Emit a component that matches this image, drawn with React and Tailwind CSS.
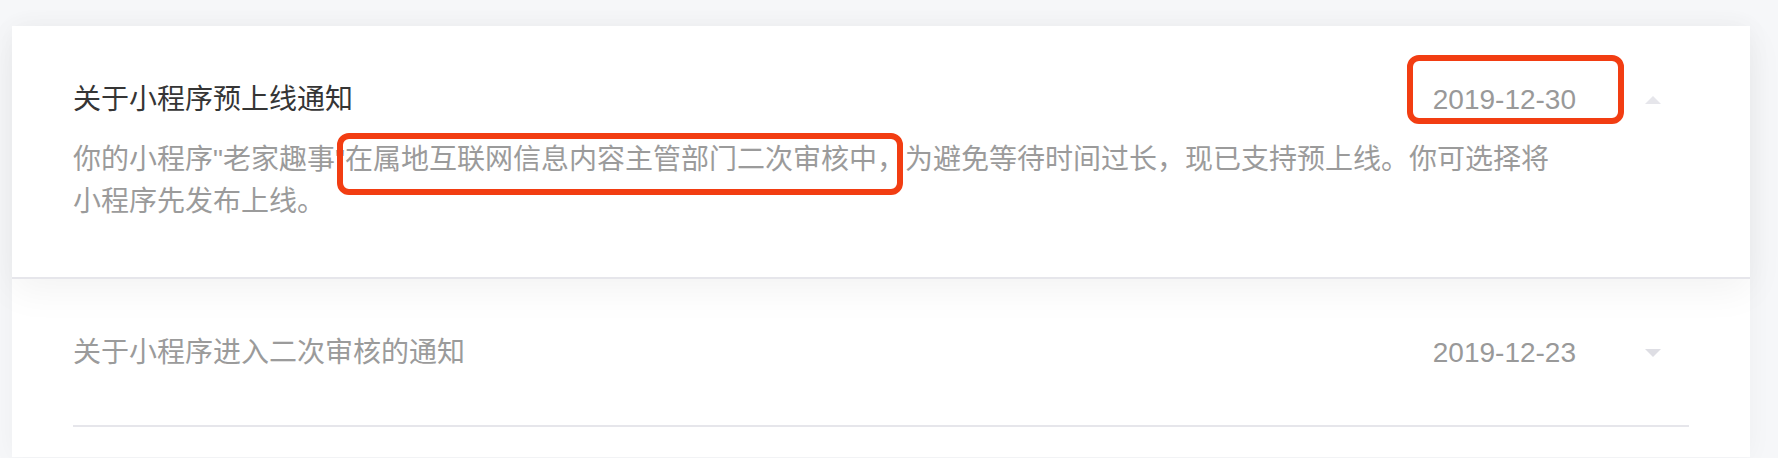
import React, { useState } from 'react';

const notices = [
  {
    id: 1,
    title: '关于小程序预上线通知',
    date: '2019-12-30',
    body: '你的小程序"老家趣事"在属地互联网信息内容主管部门二次审核中，为避免等待时间过长，现已支持预上线。你可选择将小程序先发布上线。',
  },
  {
    id: 2,
    title: '关于小程序进入二次审核的通知',
    date: '2019-12-23',
    body: '',
  },
];

const Caret = ({ up }) => (
  <svg width="16" height="8" viewBox="0 0 16 8" className="block">
    {up ? <path d="M8 0 L16 8 L0 8 Z" fill="#e6e6eb" /> : <path d="M0 0 L16 0 L8 8 Z" fill="#dedee4" />}
  </svg>
);

const App = () => {
  const [openId, setOpenId] = useState(1);

  return (
    <div
      className="relative h-[458px] bg-[#f6f7f9] pt-[26px] pl-[12px] pr-[28px] overflow-hidden"
      style={{ fontFamily: '"Liberation Sans", "Noto Sans CJK SC", sans-serif' }}
    >
      <div className="bg-white shadow-[0_0_24px_rgba(0,0,0,0.04)]">
        {notices.map((item) => {
          const open = item.id === openId;
          return open ? (
            <div
              key={item.id}
              className="relative z-10 bg-white px-[61px] pt-[53px] pb-[54px] border-b-2 border-[#e6e6eb] shadow-[0_12px_36px_rgba(0,0,0,0.05)] cursor-pointer"
              onClick={() => setOpenId(0)}
            >
              <div className="flex items-center">
                <div className="flex-1 text-[28px] leading-[42px] text-[#353535]">{item.title}</div>
                <div className="text-[28px] leading-[42px] text-[#999]">{item.date}</div>
                <div className="ml-[69px] mr-[28px]">
                  <Caret up />
                </div>
              </div>
              <p className="mt-[18px] w-[1490px] text-[28px] leading-[42px] text-[#9b9b9b]">{item.body}</p>
            </div>
          ) : (
            <div key={item.id} className="bg-white px-[61px] cursor-pointer" onClick={() => setOpenId(item.id)}>
              <div className="flex items-center pt-[53px] pb-[51px] border-b-2 border-[#e6e6eb]">
                <div className="flex-1 text-[28px] leading-[42px] text-[#9b9b9b]">{item.title}</div>
                <div className="text-[28px] leading-[42px] text-[#999]">{item.date}</div>
                <div className="ml-[69px] mr-[28px]">
                  <Caret />
                </div>
              </div>
              <div className="h-[30px]" />
            </div>
          );
        })}
      </div>

      {/* annotation boxes */}
      <div className="absolute z-20 left-[1407px] top-[55px] w-[217px] h-[69px] border-[6px] border-[#f23d12] rounded-[12px] pointer-events-none" />
      <div className="absolute z-20 left-[337px] top-[133px] w-[566px] h-[62px] border-[6px] border-[#f23d12] rounded-[12px] pointer-events-none" />
    </div>
  );
};

export default App;
